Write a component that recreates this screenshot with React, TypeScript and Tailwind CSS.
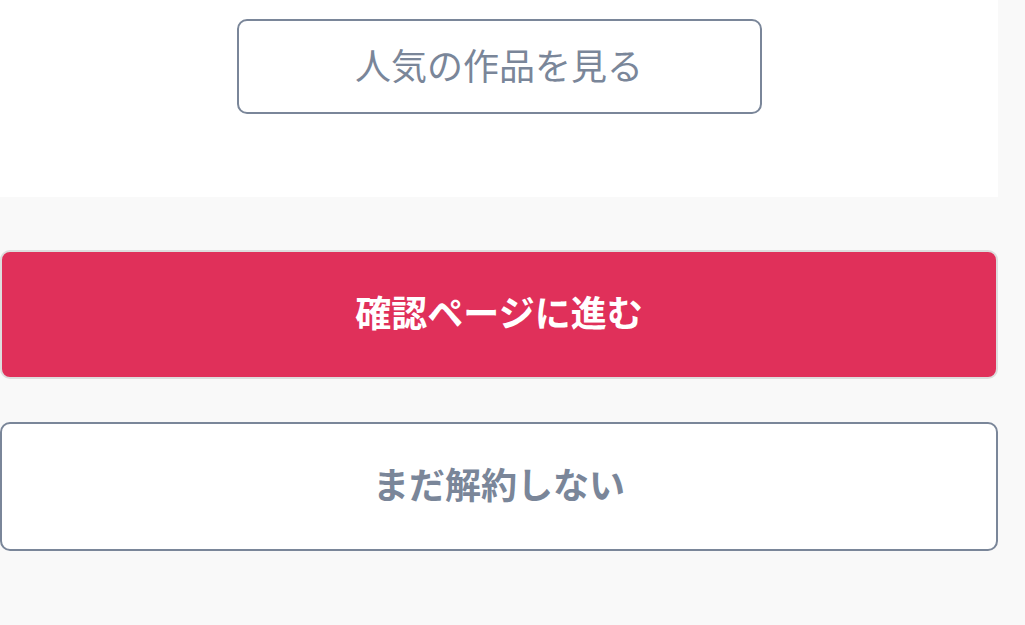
export default function App() {
  return (
    <div
      className="min-h-[625px] w-[1025px] bg-[#f9f9f9] overflow-hidden"
      style={{ fontFamily: '"Noto Sans CJK JP", "Noto Sans", sans-serif' }}
    >
      <div className="w-[998px] h-[197px] bg-white flex justify-center pt-[19px]">
        <button className="w-[525px] h-[95px] rounded-[10px] border-2 border-[#7a8699] bg-white text-[#7a8699] text-[36px] leading-none pb-[6px] flex items-center justify-center">
          人気の作品を見る
        </button>
      </div>
      <div className="w-[998px] pt-[53px] flex flex-col gap-[43px]">
        <button className="w-[998px] h-[129px] rounded-[10px] border-2 border-[#dddddd] bg-[#e0305a] text-white text-[36px] font-bold leading-none pb-[8px] flex items-center justify-center">
          確認ページに進む
        </button>
        <button className="w-[998px] h-[129px] rounded-[10px] border-2 border-[#7a8699] bg-white text-[#7a8699] text-[36px] font-bold leading-none pb-[8px] flex items-center justify-center">
          まだ解約しない
        </button>
      </div>
    </div>
  );
}
